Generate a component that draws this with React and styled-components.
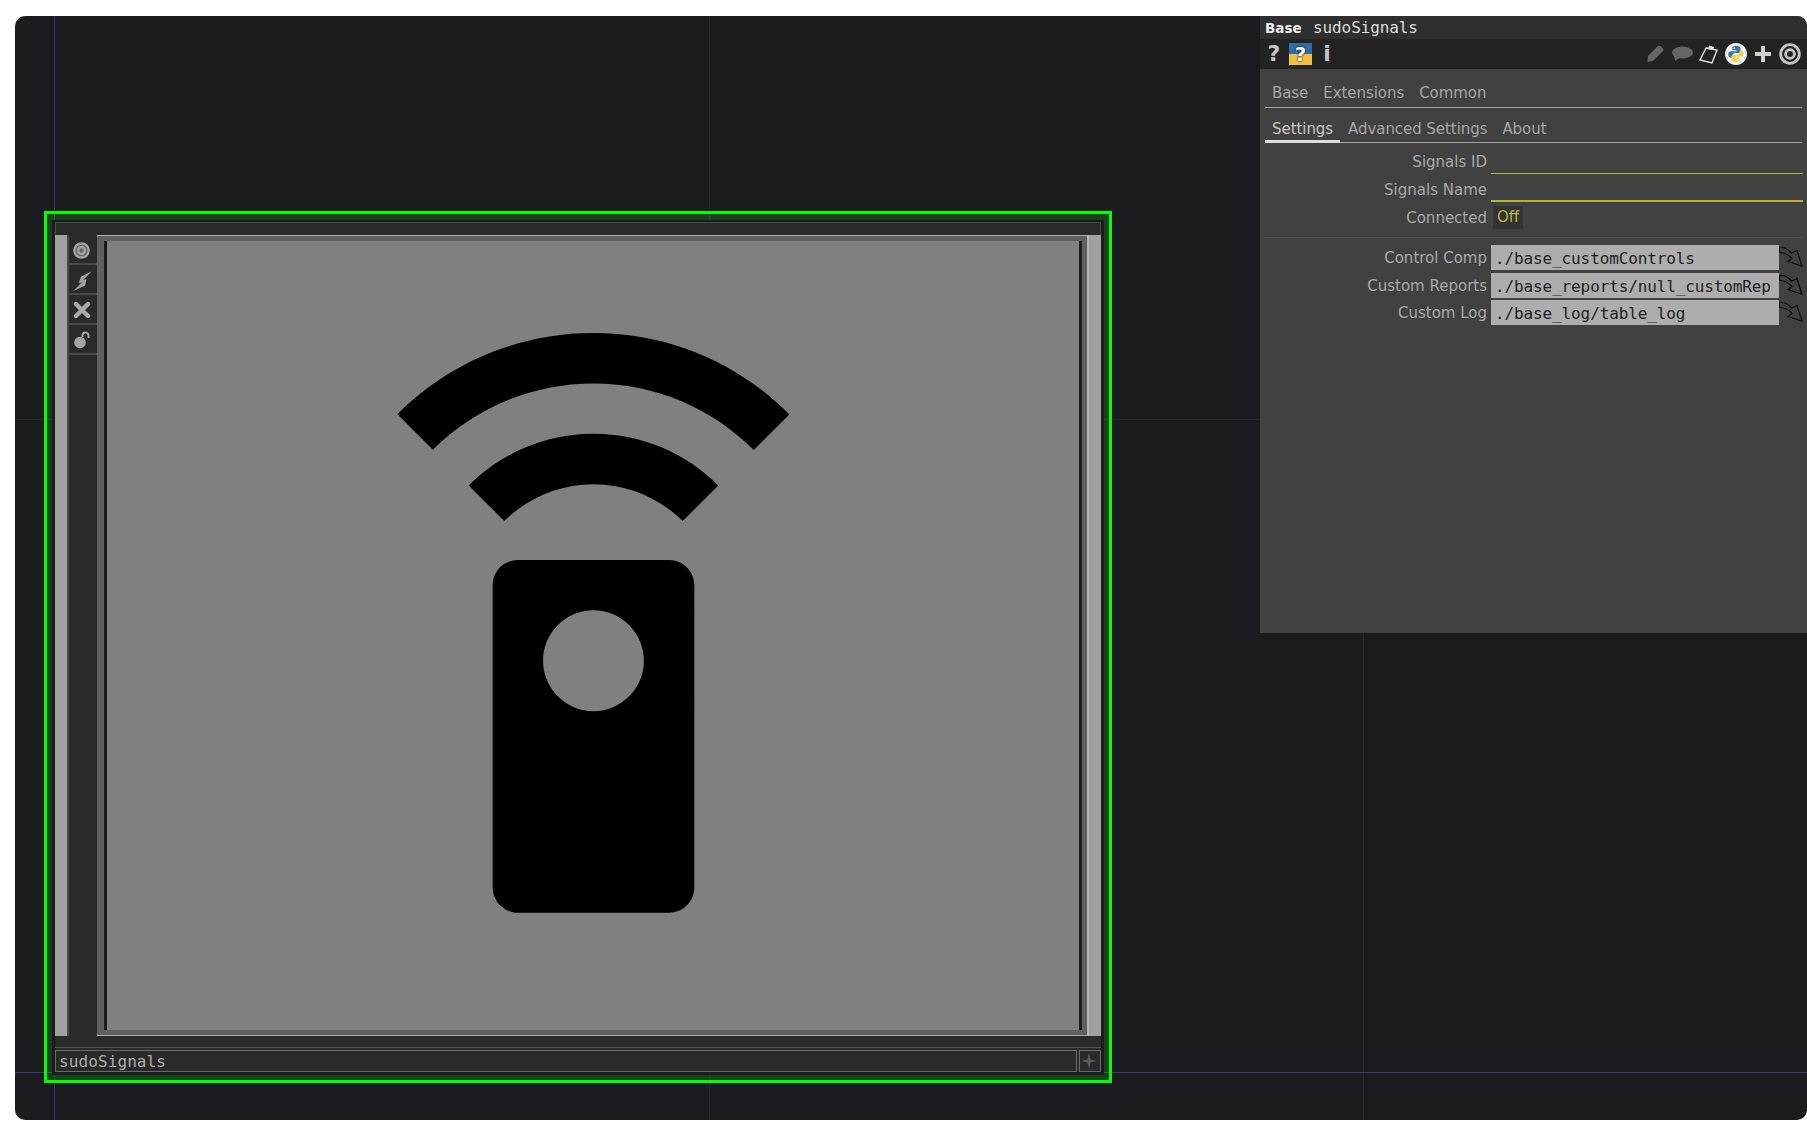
import React from 'react'
import styled, { createGlobalStyle } from 'styled-components'

const GlobalStyle = createGlobalStyle`
html, body {
    margin: 0;
    background: #fff;
}
`

const sans = '"DejaVu Sans", sans-serif'
const mono = '"DejaVu Sans Mono", monospace'

const Page = styled.div`
padding: 16px 0 16px 15px;
width: 1807px;
height: 1136px;
box-sizing: border-box;
`

const Canvas = styled.div`
position: relative;
display: flex;
align-items: flex-start;
height: 1104px;
padding-left: 29px;
box-sizing: border-box;
background: #1b1c20;
border-radius: 10px;
overflow: hidden;
`

const GuideV = styled.div`
position: absolute;
top: 0;
bottom: 0;
left: ${(props) => props.x}px;
width: 1px;
background: ${(props) => props.color};
`

const GuideH = styled.div`
position: absolute;
left: 0;
right: 0;
top: ${(props) => props.y}px;
height: 1px;
background: ${(props) => props.color};
`

const SelectFrame = styled.div`
position: relative;
margin-top: 195px;
width: 1068px;
height: 872px;
box-sizing: border-box;
border: 3px solid #00ff00;
background: rgba(0, 255, 0, 0.18);
padding: 6px 5px 5px;
`

const Node = styled.div`
display: flex;
flex-direction: column;
height: 100%;
box-sizing: border-box;
border: 3px solid #1b1c20;
border-top-width: 2px;
background: #2a2a2a;
`

const NodeHeader = styled.div`
height: 13px;
box-sizing: border-box;
border: 1px solid #4a4a4a;
border-bottom: none;
`

const NodeBody = styled.div`
flex: 1;
display: flex;
min-height: 0;
`

const SideStrip = styled.div`
width: ${(props) => props.width}px;
box-sizing: border-box;
background: #a0a0a0;
border-left: ${(props) => (props.lined ? '2px solid #b4b4b4' : 'none')};
`

const ToolColumn = styled.div`
width: 30px;
box-sizing: border-box;
border-left: 2px solid #4a4a4a;
display: flex;
flex-direction: column;
`

const ToolButton = styled.div`
height: 30px;
box-sizing: border-box;
padding: 2px 3px 0 0;
border-bottom: 2px solid #4a4a4a;
display: flex;
align-items: center;
justify-content: center;
`

const ViewerFrame = styled.div`
flex: 1;
display: flex;
box-sizing: border-box;
padding: 5px 5px 5px 7px;
background: #606060;
border-top: 1px solid #ababab;
border-bottom: 1px solid #ababab;
`

const Viewer = styled.div`
flex: 1;
display: flex;
align-items: center;
justify-content: center;
background: #808080;
border-left: 3px solid #1b1c20;
border-right: 3px solid #1b1c20;
`

const NodeFooter = styled.div`
height: 14px;
box-sizing: border-box;
padding-top: 11px;
&::after {
    content: "";
    display: block;
    height: 1px;
    background: #555;
}
`

const NameRow = styled.div`
display: flex;
gap: 2px;
height: 22px;
`

const NameField = styled.div`
flex: 1;
box-sizing: border-box;
border: 1px solid #6a6a6a;
padding-left: 3px;
font: 16px/21px ${mono};
letter-spacing: 0.1px;
color: #adadad;
`

const AddButton = styled.div`
width: 22px;
box-sizing: border-box;
border: 1px solid #6a6a6a;
padding-right: 3px;
display: flex;
align-items: center;
justify-content: center;
`

const Panel = styled.div`
margin-left: auto;
width: 547px;
height: 617px;
background: #414141;
position: relative;
z-index: 1;
font-family: ${sans};
`

const TitleBar = styled.div`
height: 23px;
display: flex;
align-items: center;
padding-left: 5px;
background: #2f2f2f;
`

const TitleType = styled.span`
font: bold 13.5px ${sans};
color: #eee;
width: 48px;
`

const TitleName = styled.span`
font: 16px ${mono};
letter-spacing: -0.1px;
color: #ddd;
`

const IconBar = styled.div`
height: 30px;
display: flex;
align-items: center;
background: #232323;
padding: 0 4px 0 2px;
`

const HelpGlyph = styled.span`
width: 24px;
font: bold 22px/32px ${sans};
color: #c4c4c4;
text-align: center;
`

const PyHelp = styled.span`
width: 23px;
height: 22px;
margin: 0 3px 0 3px;
display: flex;
align-items: center;
justify-content: center;
background: linear-gradient(#2f6ea5 0 52%, #f0c040 52% 100%);
font: bold 20px ${sans};
color: #fff;
text-shadow: 0 0 2px #000, 0 0 1px #000;
`

const IconSpacer = styled.div`
flex: 1;
`

const IconSlot = styled.span`
width: 27px;
display: flex;
justify-content: center;
`

const TabRow = styled.div`
display: flex;
gap: 15px;
margin: 0 5px;
padding: ${(props) => props.pad};
border-bottom: 1px solid #a4a4a4;
height: ${(props) => props.height}px;
box-sizing: border-box;
align-items: center;
position: relative;
`

const Tab = styled.span`
font-size: 15px;
letter-spacing: -0.06px;
color: ${(props) => (props.active ? '#c8c8c8' : '#a6a6a6')};
`

const TabMark = styled.div`
position: absolute;
left: 0;
bottom: -1px;
width: 75px;
height: 3px;
background: #dcdcdc;
`

const ParamGroup = styled.div`
padding-top: ${(props) => props.top}px;
`

const Param = styled.div`
display: grid;
grid-template-columns: 227px 1fr;
column-gap: 4px;
height: ${(props) => props.height}px;
margin-top: ${(props) => props.gap || 0}px;
align-items: center;
`

const Label = styled.span`
font-size: 15px;
padding-top: ${(props) => props.nudge || 0}px;
color: #a9a9a9;
text-align: right;
`

const TextLine = styled.div`
height: 100%;
margin-right: 4px;
box-sizing: border-box;
border-bottom: ${(props) => props.weight}px solid #b4b43c;
`

const Toggle = styled.span`
justify-self: start;
margin-left: 2px;
height: 23px;
width: 30px;
text-align: center;
background: #333;
font-size: 15px;
line-height: 23px;
color: #b8b83e;
`

const Divider = styled.div`
margin: 8px 4px 7px;
height: 1px;
background: #4d4d4d;
`

const PathRow = styled.div`
display: flex;
`

const PathField = styled.div`
width: 288px;
height: 25px;
box-sizing: border-box;
padding-left: 4px;
background: #adadad;
font: 16px/27px ${mono};
letter-spacing: -0.12px;
color: #1e1e1e;
overflow: hidden;
white-space: nowrap;
`

const ArrowSlot = styled.div`
width: 24px;
padding-top: 1px;
`

// material settings_remote, same proportions as the viewer image
function RemoteIcon() {
    return (
        <svg width="605" height="605" viewBox="0 0 24 24" fill="#000">
            <path d="M15 9H9c-.55 0-1 .45-1 1v12c0 .55.45 1 1 1h6c.55 0 1-.45 1-1V10c0-.55-.45-1-1-1zm-3 6c-1.1 0-2-.9-2-2s.9-2 2-2 2 .9 2 2-.9 2-2 2zM7.05 6.05l1.41 1.41C9.37 6.56 10.62 6 12 6s2.63.56 3.54 1.46l1.41-1.41C15.68 4.78 13.93 4 12 4s-3.68.78-4.95 2.05zM12 0C8.96 0 6.21 1.23 4.22 3.22l1.41 1.41C7.26 3.01 9.51 2 12 2s4.74 1.01 6.36 2.64l1.41-1.41C17.79 1.23 15.04 0 12 0z" />
        </svg>
    )
}

function TargetIcon({ size, color, center }) {
    return (
        <svg width={size} height={size} viewBox="0 0 20 20" fill={center} stroke={color}>
            <circle cx="10" cy="10" r="8.5" strokeWidth="2.6" />
            <circle cx="10" cy="10" r="4" strokeWidth="2.6" />
        </svg>
    )
}

function BoltIcon() {
    return (
        <svg width="22" height="22" viewBox="0 0 20 20" fill="#a0a0a0">
            <path d="M19 2 9 7 7 13 10 12 2 20 13 15 14 9 11 10z" />
        </svg>
    )
}

function CrossIcon() {
    return (
        <svg width="18" height="18" viewBox="0 0 18 18" stroke="#aaa" strokeWidth="4.4" strokeLinecap="round">
            <path d="M3 3 15 15M15 3 3 15" />
        </svg>
    )
}

function LockIcon() {
    return (
        <svg width="18" height="18" viewBox="0 0 18 18" fill="none">
            <circle cx="7" cy="11.5" r="5.8" fill="#a4a4a4" />
            <path d="M9.5 6V4.5a3 3 0 0 1 6 0V7" stroke="#a4a4a4" strokeWidth="2" />
        </svg>
    )
}

function StarIcon() {
    return (
        <svg width="16" height="16" viewBox="0 0 16 16" fill="#5c5c5c">
            <path d="M8 0 9.6 6.4 16 8 9.6 9.6 8 16 6.4 9.6 0 8 6.4 6.4z" />
        </svg>
    )
}

function PencilIcon() {
    return (
        <svg width="18" height="18" viewBox="0 0 18 18" fill="#666">
            <path d="M11.5 1.5a2.5 2.5 0 0 1 3.5 0l1.5 1.5a2.5 2.5 0 0 1 0 3.5L7 16 1.5 17 2 11z" />
        </svg>
    )
}

function BubbleIcon() {
    return (
        <svg width="22" height="16" viewBox="0 0 22 16" fill="#666">
            <ellipse cx="11.5" cy="6.5" rx="10.5" ry="6" />
            <path d="M3 9 4 15 10 11z" />
        </svg>
    )
}

function ClipboardIcon() {
    return (
        <svg width="22" height="22" viewBox="0 0 22 22" fill="#232323" stroke="#e4e4e4" strokeWidth="1.4">
            <path d="M8 5 19 7 14 20 2 17z" />
            <path d="M11 2.5 16 4 15 7 10 6z" fill="#e4e4e4" stroke="none" />
        </svg>
    )
}

function PythonIcon() {
    return (
        <svg width="22" height="22" viewBox="0 0 24 24">
            <circle cx="12" cy="12" r="12" fill="#f4f4f4" />
            <path d="M12 3C8.5 3 8 4.3 8 5.6V8h4.3v1H6.6C4.7 9 3.5 10.4 3.5 12.6s1.2 3.6 3 3.6H8v-2.4c0-1.7 1.3-3 3-3h3.8c1.3 0 2.2-1 2.2-2.2V5.6C17 4 15.4 3 12 3z" fill="#3a76a8" />
            <path d="M12 21c3.5 0 4-1.3 4-2.6V16h-4.3v-1h5.7c1.9 0 3.1-1.4 3.1-3.600s-1.200-3.600-3-3.600H16v2.400c0 1.700-1.300 3-3 3H9.200C7.900 13.200 7 14.200 7 15.400v3C7 20 8.600 21 12 21z" fill="#f5cf4a" />
            <circle cx="10" cy="5.6" r="0.9" fill="#f4f4f4" />
            <circle cx="14" cy="18.4" r="0.9" fill="#f4f4f4" />
        </svg>
    )
}

function PlusIcon() {
    return (
        <svg width="20" height="20" viewBox="0 0 20 20" stroke="#d0d0d0" strokeWidth="4">
            <path d="M10 2V18M2 10H18" />
        </svg>
    )
}

function ArrowIcon({ stroke }) {
    return (
        <svg width="24" height="21" viewBox="0 0 24 21" fill="#414141" stroke={stroke} strokeWidth="1.2">
            <path d="M.5 1.5C6 1 9.5 3.5 12.5 7L18 4.5 23 20 9 15.500 13 12.500C10 9 6 6.500.5 6.500z" />
        </svg>
    )
}

const toolIcons = [
    <TargetIcon key="t" size={17} color="#a4a4a4" center="#6a6a6a" />,
    <BoltIcon key="b" />,
    <CrossIcon key="c" />,
    <LockIcon key="l" />,
]

const paths = [
    { label: 'Control Comp', value: './base_customControls', stroke: '#111', gap: 0 },
    { label: 'Custom Reports', value: './base_reports/null_customRep', stroke: '#000', gap: 3 },
    { label: 'Custom Log', value: './base_log/table_log', stroke: '#111', gap: 2 },
]

export default function App() {
    return (
        <Page>
            <GlobalStyle />
            <Canvas>
                <GuideV x={39} color="#363a68" />
                <GuideV x={694} color="#26272c" />
                <GuideV x={1348} color="#26272c" />
                <GuideH y={403} color="#26272c" />
                <GuideH y={1056} color="#3d3f72" />

                <SelectFrame>
                    <Node>
                        <NodeHeader />
                        <NodeBody>
                            <SideStrip width={12} />
                            <ToolColumn>
                                {toolIcons.map((icon, i) => (
                                    <ToolButton key={i}>{icon}</ToolButton>
                                ))}
                            </ToolColumn>
                            <ViewerFrame>
                                <Viewer>
                                    <RemoteIcon />
                                </Viewer>
                            </ViewerFrame>
                            <SideStrip width={14} lined />
                        </NodeBody>
                        <NodeFooter />
                        <NameRow>
                            <NameField>sudoSignals</NameField>
                            <AddButton><StarIcon /></AddButton>
                        </NameRow>
                    </Node>
                </SelectFrame>

                <Panel>
                    <TitleBar>
                        <TitleType>Base</TitleType>
                        <TitleName>sudoSignals</TitleName>
                    </TitleBar>
                    <IconBar>
                        <HelpGlyph>?</HelpGlyph>
                        <PyHelp>?</PyHelp>
                        <HelpGlyph>i</HelpGlyph>
                        <IconSpacer />
                        <IconSlot><PencilIcon /></IconSlot>
                        <IconSlot><BubbleIcon /></IconSlot>
                        <IconSlot><ClipboardIcon /></IconSlot>
                        <IconSlot><PythonIcon /></IconSlot>
                        <IconSlot><PlusIcon /></IconSlot>
                        <IconSlot><TargetIcon size={22} color="#c4c4c4" center="none" /></IconSlot>
                    </IconBar>
                    <TabRow height={39} pad="9px 0 0 7px">
                        <Tab>Base</Tab>
                        <Tab>Extensions</Tab>
                        <Tab>Common</Tab>
                    </TabRow>
                    <TabRow height={35} pad="7px 0 0 7px">
                        <Tab active>Settings</Tab>
                        <Tab>Advanced Settings</Tab>
                        <Tab>About</Tab>
                        <TabMark />
                    </TabRow>
                    <ParamGroup top={4}>
                        <Param height={27}>
                            <Label nudge={3}>Signals ID</Label>
                            <TextLine weight={1} />
                        </Param>
                        <Param height={28}>
                            <Label nudge={4}>Signals Name</Label>
                            <TextLine weight={2} />
                        </Param>
                        <Param height={23} gap={4}>
                            <Label>Connected</Label>
                            <Toggle>Off</Toggle>
                        </Param>
                    </ParamGroup>
                    <Divider />
                    {paths.map((p) => (
                        <Param key={p.label} height={25} gap={p.gap}>
                            <Label>{p.label}</Label>
                            <PathRow>
                                <PathField>{p.value}</PathField>
                                <ArrowSlot><ArrowIcon stroke={p.stroke} /></ArrowSlot>
                            </PathRow>
                        </Param>
                    ))}
                </Panel>
            </Canvas>
        </Page>
    )
}
